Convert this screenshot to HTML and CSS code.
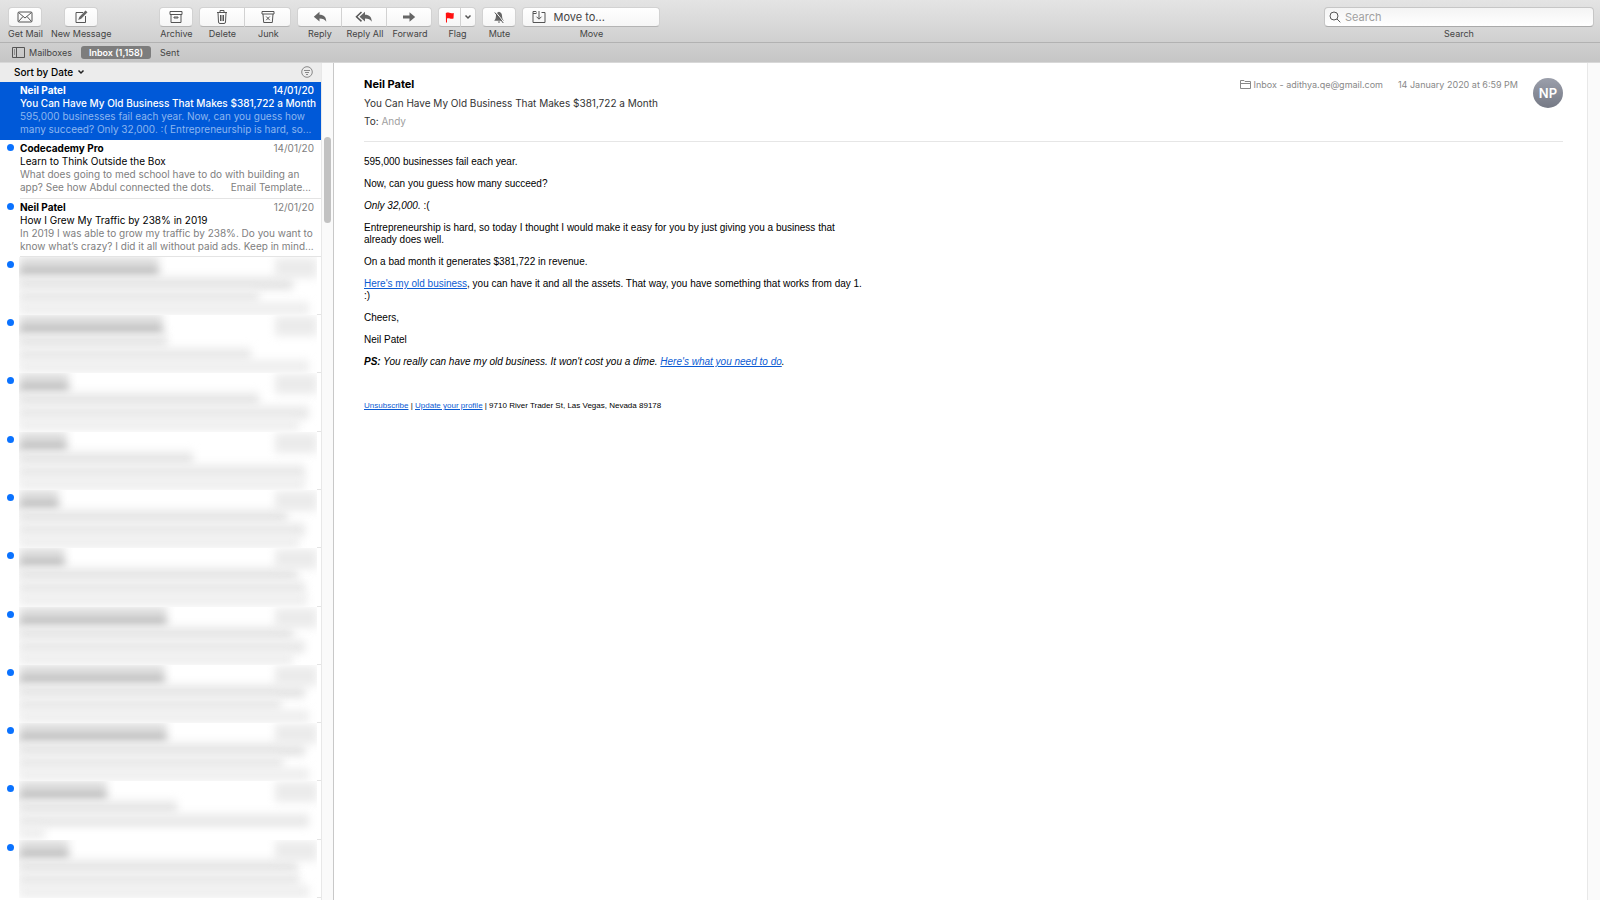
FILE: index.html
```html
<!DOCTYPE html>
<html lang="en">
  <head>
    <meta charset="utf-8">
    <title>Inbox (1,158)</title>
    <link rel="stylesheet" href="styles.css">
  </head>
  <body>
    <header class="toolbar">
      <div class="tool-group start">
        <div class="tool">
          <button id="getMail" class="tool-button"><svg width="16" height="12" viewBox="0 0 16 12"><rect x="1" y="1" width="14" height="10" rx="1"/><path d="M1.5 1.5L8 7l6.500-5.500M1.500 10.500L6 5.500M14.500 10.500L10 5.500"/></svg></button>
          <label for="getMail">Get Mail</label>
        </div>
        <div class="tool">
          <button id="newMessage" class="tool-button"><svg width="14" height="14" viewBox="0 0 14 14"><path d="M9 2.500H2v10h9.500V6"/><path class="solid" d="M11.500.5l2 1.800L7.200 8.800l-3 1.300L5.300 7z"/></svg></button>
          <label for="newMessage">New Message</label>
        </div>
      </div>

      <div class="tool-group">
        <div class="tool">
          <button id="archive" class="tool-button"><svg width="14" height="12" viewBox="0 0 14 12"><path d="M1 .5h12v3H1zM2 3.500v8h10v-8M5 6h4v1H5z"/></svg></button>
          <label for="archive">Archive</label>
        </div>
      </div>

      <div class="tool-group joined">
        <div class="tool">
          <button id="delete" class="tool-button wide"><svg width="12" height="14" viewBox="0 0 12 14"><path d="M1 2.500h10M4 2.500v-2h4v2M2 2.500l.5 9.500q0 1.500 1.500 1.500h4q1.500 0 1.500-1.500L10 2.500M4.500 5v6M6 5v6M7.500 5v6"/></svg></button>
          <label for="delete">Delete</label>
        </div>
        <div class="tool">
          <button id="junk" class="tool-button wide"><svg width="14" height="12" viewBox="0 0 14 12"><path d="M1 .5h12v2.500H1zM2 3l.7 8.500h8.600L12 3M5.200 5.500l3.600 3.700M8.800 5.500L5.200 9.200"/></svg></button>
          <label for="junk">Junk</label>
        </div>
      </div>

      <div class="tool-group joined">
        <div class="tool">
          <button id="reply" class="tool-button reply"><svg width="14" height="12" viewBox="0 0 14 12"><path class="solid" d="M6.500.8v3c4.500 0 6.500 2 6.800 7-1.600-2.600-3.300-3.300-6.800-3.300v3L.8 5.700z"/></svg></button>
          <label for="reply">Reply</label>
        </div>
        <div class="tool">
          <button id="replyAll" class="tool-button reply"><svg width="18" height="12" viewBox="0 0 18 12"><path class="solid" d="M10 .8v3c4.500 0 6.500 2 6.800 7-1.600-2.600-3.300-3.300-6.800-3.300v3L4.500 5.700z"/><path class="thick" d="M6.500 1L1.500 5.700l5 4.700"/></svg></button>
          <label for="replyAll">Reply All</label>
        </div>
        <div class="tool">
          <button id="forward" class="tool-button reply"><svg width="14" height="12" viewBox="0 0 14 12"><path class="solid" d="M7.500 1.200L13.200 6l-5.700 4.800V7.600H1V4.400h6.500z"/></svg></button>
          <label for="forward">Forward</label>
        </div>
      </div>

      <div class="tool-group">
        <div class="tool">
          <div class="split">
            <button id="flag" class="tool-button flag"><svg width="10" height="11" viewBox="0 0 10 11"><path class="red" d="M.8 1l.8-.3C3.500 0 5 2 8.800 1L8.500 6.500C5.500 7.500 4 5.500 2 6.500L2 10.500H1z"/></svg></button>
            <button class="tool-button flag-menu" aria-label="Flag colors"><svg width="8" height="6" viewBox="0 0 8 6"><path class="thick" d="M1.500 1.500L4 4l2.500-2.500"/></svg></button>
          </div>
          <label for="flag">Flag</label>
        </div>
      </div>

      <div class="tool-group">
        <div class="tool">
          <button id="mute" class="tool-button"><svg width="12" height="13" viewBox="0 0 12 13"><path class="solid" d="M6 .8C3.500 1.500 3 3 2.900 5.500 2.800 7.500 2.200 8.500 1.200 9.800h9.600C9.800 8.500 9.200 7.500 9.100 5.500 9 3 8.500 1.500 6 .8zM4.800 10.600h2.400q-.2 1.200-1.200 1.200t-1.200-1.200z"/><path class="slash" d="M2.800 1.200l8.500 10.500"/><path d="M1.800 1.500l8.500 10.500"/></svg></button>
          <label for="mute">Mute</label>
        </div>
      </div>

      <div class="tool-group">
        <div class="tool">
          <button id="move" class="tool-button move"><svg width="14" height="12" viewBox="0 0 14 12"><path d="M4.500 1.500L4 .5H1v11h12V1.500H9.500M1 2.500h3.500M7 0v8M4.500 5.700L7 8.200l2.500-2.500"/></svg>Move to...</button>
          <label for="move">Move</label>
        </div>
      </div>

      <div class="tool search">
        <div class="search-box">
          <svg width="12" height="12" viewBox="0 0 12 12"><circle cx="5" cy="5" r="4"/><path d="M8 8l3.300 3.300"/></svg>
          <input id="search" type="text" placeholder="Search">
        </div>
        <label for="search">Search</label>
      </div>
    </header>

    <nav class="favorites">
      <a href="#"><svg width="13" height="11" viewBox="0 0 13 11"><path d="M.5.500h12v10H.5zM4.500.500v10M2 3h1M2 5h1M2 7h1"/></svg>Mailboxes</a>
      <a href="#" class="current">Inbox (1,158)</a>
      <a href="#">Sent</a>
    </nav>

    <main class="content">
      <section class="mailbox">
        <div class="sort-bar">
          <button class="sort">Sort by Date <svg width="8" height="6" viewBox="0 0 8 6"><path class="thick" d="M1.500 1.500L4 4l2.500-2.500"/></svg></button>
          <button class="filter" aria-label="Filter"><svg width="12" height="12" viewBox="0 0 12 12"><circle cx="6" cy="6" r="5.300"/><path d="M3 4.500h6M4 6.500h4M5 8.500h2"/></svg></button>
        </div>

        <ul class="messages">
          <li class="message selected">
            <div class="message-top"><b>Neil Patel</b><time>14/01/20</time></div>
            <div class="subject">You Can Have My Old Business That Makes $381,722 a Month</div>
            <p>595,000 businesses fail each year. Now, can you guess how<br>many succeed? Only 32,000. :( Entrepreneurship is hard, so...</p>
          </li>
          <li class="message unread">
            <div class="message-top"><b>Codecademy Pro</b><time>14/01/20</time></div>
            <div class="subject">Learn to Think Outside the Box</div>
            <p>What does going to med school have to do with building an<br>app? See how Abdul connected the dots. &nbsp; &nbsp; &nbsp;Email Template...</p>
          </li>
          <li class="message unread">
            <div class="message-top"><b>Neil Patel</b><time>12/01/20</time></div>
            <div class="subject">How I Grew My Traffic by 238% in 2019</div>
            <p>In 2019 I was able to grow my traffic by 238%. Do you want to<br>know what’s crazy? I did it all without paid ads. Keep in mind...</p>
          </li>
          <li class="message unread hidden-text"><div class="smudge"><i style="width: 140px"></i><i style="width: 274px"></i><i style="width: 240px"></i><i style="width: 290px"></i></div></li>
          <li class="message unread hidden-text"><div class="smudge"><i style="width: 144px"></i><i style="width: 148px"></i><i style="width: 232px"></i><i style="width: 290px"></i></div></li>
          <li class="message unread hidden-text"><div class="smudge"><i style="width: 50px"></i><i style="width: 240px"></i><i style="width: 290px"></i><i style="width: 280px"></i></div></li>
          <li class="message unread hidden-text"><div class="smudge"><i style="width: 48px"></i><i style="width: 174px"></i><i style="width: 286px"></i><i style="width: 286px"></i></div></li>
          <li class="message unread hidden-text"><div class="smudge"><i style="width: 40px"></i><i style="width: 268px"></i><i style="width: 286px"></i><i style="width: 280px"></i></div></li>
          <li class="message unread hidden-text"><div class="smudge"><i style="width: 46px"></i><i style="width: 278px"></i><i style="width: 286px"></i><i style="width: 288px"></i></div></li>
          <li class="message unread hidden-text"><div class="smudge"><i style="width: 148px"></i><i style="width: 274px"></i><i style="width: 286px"></i><i style="width: 274px"></i></div></li>
          <li class="message unread hidden-text"><div class="smudge"><i style="width: 146px"></i><i style="width: 286px"></i><i style="width: 262px"></i><i style="width: 290px"></i></div></li>
          <li class="message unread hidden-text"><div class="smudge"><i style="width: 148px"></i><i style="width: 286px"></i><i style="width: 264px"></i><i style="width: 290px"></i></div></li>
          <li class="message unread hidden-text"><div class="smudge"><i style="width: 88px"></i><i style="width: 158px"></i><i style="width: 290px"></i><i style="width: 26px"></i></div></li>
          <li class="message unread hidden-text"><div class="smudge"><i style="width: 50px"></i><i style="width: 278px"></i><i style="width: 280px"></i><i style="width: 290px"></i></div></li>
        </ul>
      </section>

      <div class="scroll-track"><div class="scroll-thumb"></div></div>

      <article class="mail">
        <header class="mail-header">
          <div class="mail-from">
            <h1>Neil Patel</h1>
            <h2>You Can Have My Old Business That Makes $381,722 a Month</h2>
            <div class="to">To: <span>Andy</span></div>
          </div>
          <div class="mail-info">
            <span class="folder"><svg width="11" height="9" viewBox="0 0 11 9"><path d="M.5 8.500v-8h3.500l1 1h5.500v7zM.5 3.500h10"/></svg>Inbox - adithya.qe@gmail.com</span>
            <time>14 January 2020 at 6:59 PM</time>
          </div>
          <div class="avatar">NP</div>
        </header>

        <div class="mail-body">
          <p>595,000 businesses fail each year.</p>
          <p>Now, can you guess how many succeed?</p>
          <p><em>Only 32,000.</em> :(</p>
          <p>Entrepreneurship is hard, so today I thought I would make it easy for you by just giving you a business that<br>already does well.</p>
          <p>On a bad month it generates $381,722 in revenue.</p>
          <p><a href="#">Here's my old business</a>, you can have it and all the assets. That way, you have something that works from day 1.<br>:)</p>
          <p>Cheers,</p>
          <p>Neil Patel</p>
          <p><em><b>PS:</b> You really can have my old business. It won't cost you a dime. <a href="#">Here's what you need to do</a>.</em></p>
          <footer><a href="#">Unsubscribe</a> | <a href="#">Update your profile</a> | 9710 River Trader St, Las Vegas, Nevada 89178</footer>
        </div>
      </article>

      <div class="mail-track"></div>
    </main>
  </body>
</html>
```
FILE: styles.css
```css
* {
  box-sizing: border-box;
}
body {
  margin: 0;
  height: 100vh;
  display: flex;
  flex-direction: column;
  overflow: hidden;
  font-family: Inter, "Liberation Sans", sans-serif;
  font-size: 11px;
  color: #000;
  background: #fff;
}
svg {
  fill: none;
  stroke: #555;
  stroke-width: 1;
  flex: none;
}
svg .solid {
  fill: #666;
  stroke: none;
}
svg .thick {
  stroke-width: 1.5;
}
svg .slash {
  stroke: #fff;
  stroke-width: 1;
}
svg .red {
  fill: #ff1010;
  stroke: none;
}
button {
  font: inherit;
  color: inherit;
  border: none;
  background: none;
  padding: 0;
}

/* toolbar */
.toolbar {
  display: flex;
  gap: 6px;
  height: 43px;
  padding: 7px 6px 0 8px;
  background: linear-gradient(#e4e4e4, #d0d0d0);
  border-bottom: 1px solid #b2b2b2;
}
.tool-group {
  display: flex;
}
.tool-group.start {
  gap: 8px;
  margin-right: 42px;
}
.tool {
  display: flex;
  flex-direction: column;
  align-items: center;
}
.tool label {
  font-size: 9px;
  line-height: 13px;
  color: #444;
  white-space: nowrap;
}
.tool-button {
  display: flex;
  align-items: center;
  justify-content: center;
  width: 34px;
  height: 20px;
  border-radius: 4px;
  background: linear-gradient(#fff, #f6f6f6);
  border: 1px solid #d2d2d2;
  border-bottom-color: #b4b4b4;
}
.tool-button.wide {
  width: 46px;
}
.tool-button.reply {
  width: 45px;
}
.tool-button.flag {
  width: 23px;
  border-radius: 4px 0 0 4px;
}
.tool-button.flag-menu {
  width: 15px;
  border-left: none;
  border-radius: 0 4px 4px 0;
}
.tool-button.move {
  width: 138px;
  justify-content: flex-start;
  gap: 7px;
  padding-left: 9px;
  color: #444;
}
.split {
  display: flex;
}
.joined .tool-button {
  border-radius: 0;
}
.joined .tool + .tool .tool-button {
  border-left: none;
}
.joined .tool:first-child .tool-button {
  border-radius: 4px 0 0 4px;
}
.joined .tool:last-child .tool-button {
  border-radius: 0 4px 4px 0;
}
.search {
  width: 270px;
  margin-left: auto;
}
.search-box {
  display: flex;
  align-items: center;
  gap: 4px;
  width: 100%;
  height: 20px;
  padding: 0 4px;
  border: 1px solid #c6c6c6;
  border-bottom-color: #aaa;
  border-radius: 4px;
  background: linear-gradient(#f4f4f4, #fff);
}
.search-box input {
  flex: 1;
  min-width: 0;
  padding: 0;
  border: none;
  background: none;
  font: inherit;
}
.search-box input::placeholder {
  color: #a0a0a0;
}

/* favorites bar */
.favorites {
  display: flex;
  align-items: center;
  gap: 9px;
  height: 20px;
  padding-left: 12px;
  font-size: 9px;
  background: linear-gradient(#cfcfcf, #c6c6c6);
  border-bottom: 1px solid #d8d8d8;
}
.favorites a {
  display: flex;
  align-items: center;
  gap: 4px;
  color: #444;
  text-decoration: none;
}
.favorites .current {
  height: 13px;
  padding: 0 8px;
  border-radius: 3px;
  background: #7d7d7d;
  color: #fff;
  font-weight: 600;
}

.content {
  flex: 1;
  min-height: 0;
  display: flex;
}

/* message list */
.mailbox {
  flex: none;
  width: 321px;
  display: flex;
  flex-direction: column;
}
.sort-bar {
  flex: none;
  display: flex;
  align-items: center;
  justify-content: space-between;
  height: 19px;
  padding: 0 8px 2px 14px;
  background: #ececec;
}
.sort {
  display: flex;
  align-items: center;
  gap: 4px;
  font-size: 10px;
  line-height: 16px;
  font-weight: 500;
}
.sort svg {
  stroke: #222;
}
.filter {
  display: flex;
}
.filter svg {
  stroke: #888;
}
.messages {
  flex: 1;
  display: grid;
  grid-template-columns: 100%;
  grid-auto-rows: 1fr;
  margin: 0;
  padding: 0 0 2px 0;
  list-style: none;
}
.message {
  position: relative;
  padding: 2px 7px 0 20px;
  font-size: 10px;
  line-height: 13px;
  white-space: nowrap;
}
.message::after {
  content: "";
  position: absolute;
  left: 20px;
  right: 0;
  bottom: 0;
  border-bottom: 1px solid #e4e4e4;
}
.message.unread::before {
  content: "";
  position: absolute;
  left: 7px;
  top: 4px;
  width: 7px;
  height: 7px;
  border-radius: 50%;
  background: #0a72ff;
}
.message-top {
  display: flex;
  justify-content: space-between;
}
.message-top b {
  font-weight: 700;
}
.message time,
.message p {
  color: #808080;
}
.message p {
  margin: 0;
}
.message.selected {
  background: #0059d8;
  color: #fff;
}
.message.selected::after {
  display: none;
}
.message.selected time {
  color: #fff;
  font-weight: 500;
}
.message.selected .subject {
  font-weight: 500;
}
.message.selected p {
  color: #8cb6f0;
}

/* blurred out messages */
.message.hidden-text {
  padding: 0 4px 0 19px;
}
.smudge {
  position: relative;
  z-index: 1;
  height: 100%;
  overflow: hidden;
  background: #fff;
}
.smudge i {
  display: block;
  height: 13px;
  background: linear-gradient(#ececec 40%, #d6d6d6);
  filter: blur(4px);
}
.smudge i:first-child {
  height: 19px;
  background: linear-gradient(#dcdcdc 50%, #9c9c9c);
}
.smudge i:nth-child(3) {
  background: linear-gradient(#eee 40%, #dcdcdc);
}
.smudge i:last-child {
  background: #eee;
}
.smudge::after {
  content: "";
  position: absolute;
  right: 0;
  top: 1px;
  width: 42px;
  height: 20px;
  background: #ebebeb;
  filter: blur(4px);
}

.scroll-track {
  width: 13px;
  padding: 74px 3px 0 2px;
  background: #fafafa;
  border-left: 1px solid #e8e8e8;
  border-right: 1px solid #c8c8c8;
}
.scroll-thumb {
  width: 7px;
  height: 86px;
  border-radius: 4px;
  background: #c2c2c2;
}

/* open mail */
.mail {
  flex: 1;
  padding: 0 24px 0 30px;
}
.mail-header {
  display: flex;
  height: 79px;
  padding-top: 15px;
  border-bottom: 1px solid #e6e6e6;
}
.mail-header h1,
.mail-header h2 {
  margin: 0;
}
.mail-header h1 {
  font-size: 11px;
  line-height: 13px;
  font-weight: 700;
}
.mail-header h2 {
  margin-top: 5px;
  font-size: 10px;
  line-height: 14px;
  font-weight: 400;
  color: #333;
}
.to {
  margin-top: 4px;
  font-size: 10px;
  line-height: 14px;
  color: #333;
}
.to span {
  color: #a0a0a0;
}
.mail-info {
  display: flex;
  gap: 15px;
  margin-left: auto;
  font-size: 9px;
  line-height: 14px;
  color: #888;
}
.folder svg {
  margin-right: 3px;
  vertical-align: -1px;
  stroke: #888;
}
.avatar {
  width: 30px;
  height: 30px;
  margin-left: 15px;
  border-radius: 50%;
  background: linear-gradient(#9b9fab, #757985);
  color: #fff;
  font-size: 13px;
  font-weight: 600;
  line-height: 30px;
  text-align: center;
}
.mail-body {
  padding-top: 14px;
  font-family: "Liberation Sans", Arial, sans-serif;
  font-size: 10px;
  line-height: 12px;
}
.mail-body p {
  margin: 0 0 10px 0;
}
.mail-body a {
  color: #0b5bd3;
}
.mail-body footer {
  margin-top: 32px;
  font-size: 8px;
}
.mail-track {
  width: 13px;
  background: #fafafa;
  border-left: 1px solid #e8e8e8;
}
```
